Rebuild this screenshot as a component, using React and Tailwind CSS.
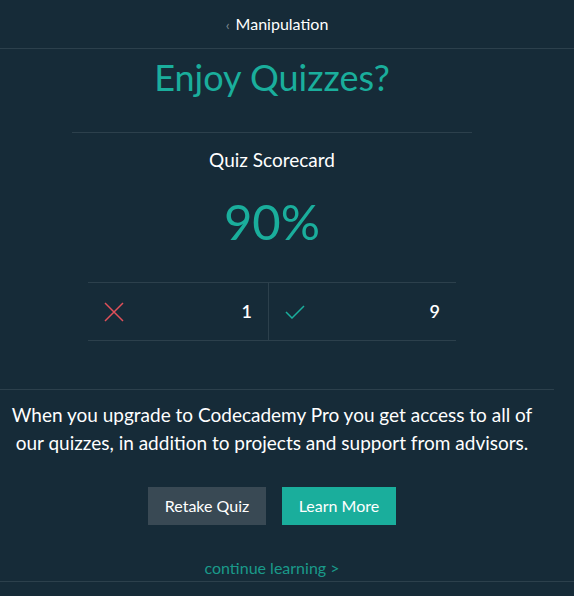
export default function App() {
  return (
    <div className="w-[574px] h-[596px] bg-[#162b38] overflow-hidden text-white" style={{ fontFamily: "Lato, 'Open Sans', sans-serif" }}>
      <div className="border-b border-[#2c404c]">
        <div className="h-[48px] w-[554px] flex items-center justify-center gap-[6px]">
          <span className="text-[#7d8a92] text-[14px]">‹</span>
          <span className="text-[16px]">Manipulation</span>
        </div>
      </div>
      <div className="w-[544px] flex flex-col items-center">
        <h1 className="text-[#1aae9c] text-[36px] font-normal leading-none mt-[6px] h-[77px] flex items-start pt-[4px]">Enjoy Quizzes?</h1>
        <div className="w-[400px] border-t border-[#2c404c]" />
        <div className="text-[19px] mt-[17px] leading-none">Quiz Scorecard</div>
        <div className="text-[#1aae9c] text-[49px] font-normal leading-none mt-[28px]">90%</div>
        <div className="w-[368px] mt-[36px] h-[59px] border-t border-b border-[#2c404c] flex">
          <div className="w-[181px] flex items-center justify-between pl-[16px] pr-[16px] border-r border-[#2c404c]">
            <svg width="20" height="20" viewBox="0 0 20 20"><path d="M1 1 L19 19 M19 1 L1 19" stroke="#e0505a" strokeWidth="1.5" fill="none" /></svg>
            <span className="text-[18px] font-semibold">1</span>
          </div>
          <div className="flex-1 flex items-center justify-between pl-[16px] pr-[16px]">
            <svg width="20" height="14" viewBox="0 0 20 14"><path d="M1 7 L7 13 L19 1" stroke="#1aae9c" strokeWidth="1.5" fill="none" /></svg>
            <span className="text-[18px] font-semibold">9</span>
          </div>
        </div>
      </div>
      <div className="w-[554px] border-t border-[#2c404c] mt-[48px]" />
      <p className="w-[544px] text-center text-[19px] leading-[28px] mt-[11px]">When you upgrade to Codecademy Pro you get access to all of our quizzes, in addition to projects and support from advisors.</p>
      <div className="w-[544px] flex justify-center gap-[16px] mt-[30px]">
        <button className="w-[118px] h-[38px] bg-[#394954] text-[16px] text-white">Retake Quiz</button>
        <button className="w-[114px] h-[38px] bg-[#1aae9c] text-[16px] text-white">Learn More</button>
      </div>
      <div className="w-[544px] text-center text-[#1a9a8a] text-[16px] mt-[35px] leading-none h-[21px]">continue learning &gt;</div>
      <div className="border-t border-[#2c404c]" />
    </div>
  );
}
